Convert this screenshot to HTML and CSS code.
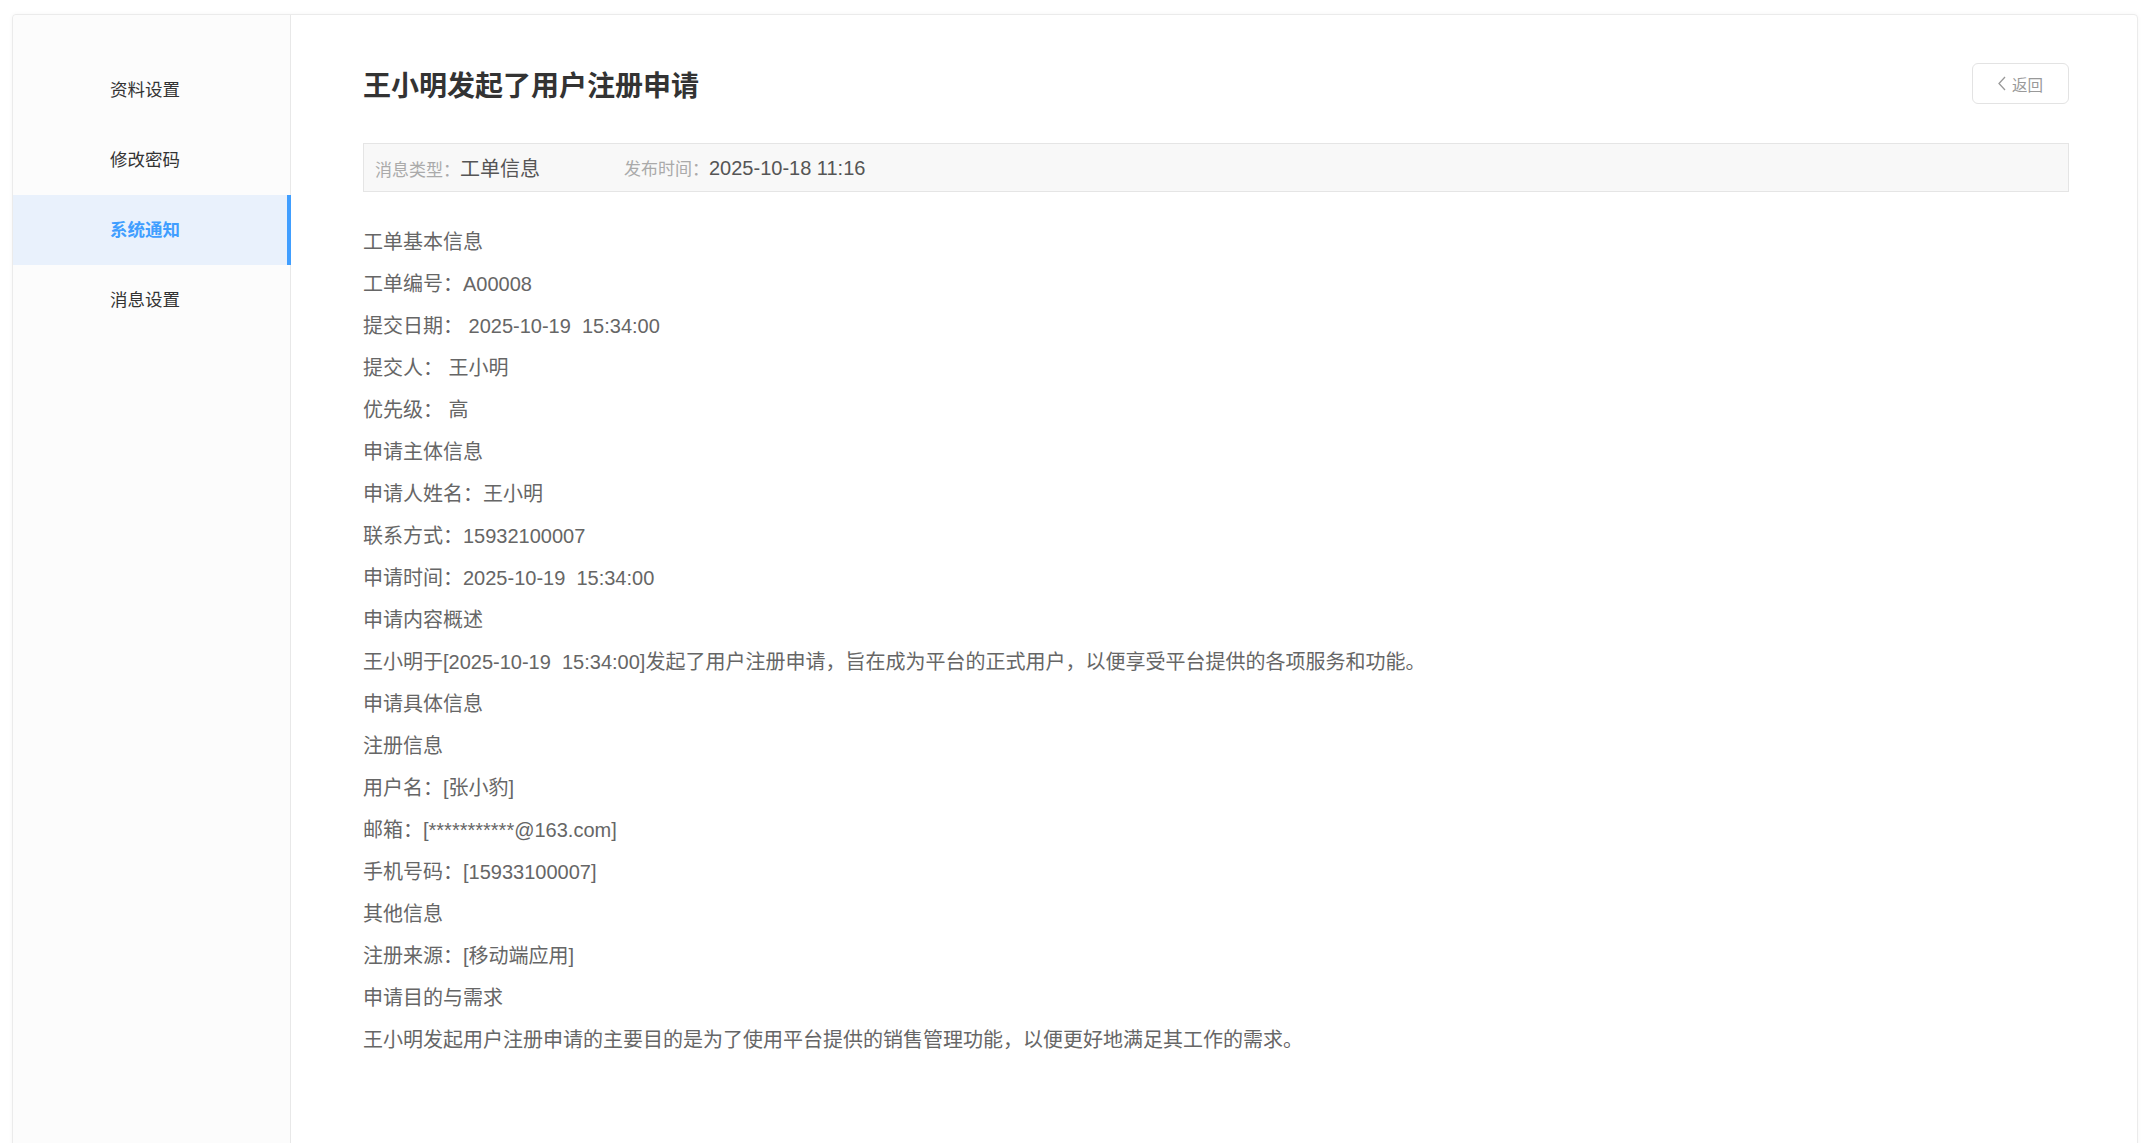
FILE: index.html
```html
<!DOCTYPE html>
<html lang="zh-CN">
<head>
    <meta charset="UTF-8">
    <meta name="viewport" content="width=device-width, initial-scale=1.0">
    <title>系统通知</title>
    <link rel="stylesheet" href="styles.css">
</head>
<body>
  <div class="card">
    <aside class="side-menu">
      <ul class="menu-list">
        <li class="menu-item">资料设置</li>
        <li class="menu-item">修改密码</li>
        <li class="menu-item menu-item--active">系统通知</li>
        <li class="menu-item">消息设置</li>
      </ul>
    </aside>
    <main class="detail">
      <div class="detail-head">
        <h1 class="detail-title">王小明发起了用户注册申请</h1>
        <button class="back-btn">
          <svg class="back-icon" width="10" height="15" viewBox="0 0 10 15">
            <path d="M8 1 L2 7.5 L8 14" fill="none" stroke="#999" stroke-width="1.3"/>
          </svg>
          返回
        </button>
      </div>
      <div class="meta-bar">
        <div class="meta-item"><span class="meta-label">消息类型：</span><span class="meta-value">工单信息</span></div>
        <div class="meta-item"><span class="meta-label">发布时间：</span><span class="meta-value">2025-10-18 11:16</span></div>
      </div>
      <div class="detail-body">
        <p>工单基本信息</p>
        <p>工单编号：A00008</p>
        <p>提交日期： 2025-10-19  15:34:00</p>
        <p>提交人： 王小明</p>
        <p>优先级： 高</p>
        <p>申请主体信息</p>
        <p>申请人姓名：王小明</p>
        <p>联系方式：15932100007</p>
        <p>申请时间：2025-10-19  15:34:00</p>
        <p>申请内容概述</p>
        <p>王小明于[2025-10-19  15:34:00]发起了用户注册申请，旨在成为平台的正式用户，以便享受平台提供的各项服务和功能。</p>
        <p>申请具体信息</p>
        <p>注册信息</p>
        <p>用户名：[张小豹]</p>
        <p>邮箱：[***********@163.com]</p>
        <p>手机号码：[15933100007]</p>
        <p>其他信息</p>
        <p>注册来源：[移动端应用]</p>
        <p>申请目的与需求</p>
        <p>王小明发起用户注册申请的主要目的是为了使用平台提供的销售管理功能，以便更好地满足其工作的需求。</p>
      </div>
    </main>
  </div>
</body>
</html>
```

FILE: styles.css
```css
html, body {
  overflow: hidden;
}

body {
  margin: 0;
  padding: 14px 11px 0 12px;
  background: #fff;
  font-family: "Liberation Sans", "Noto Sans CJK SC", sans-serif;
  color: #333;
}

.card {
  display: flex;
  min-height: 1200px;
  border: 1px solid #ebebeb;
  border-radius: 4px;
  box-shadow: 0 0 4px rgba(0, 0, 0, 0.04);
  background: #fff;
}

.side-menu {
  width: 277px;
  flex-shrink: 0;
  background: #fcfcfc;
  border-right: 1px solid #e8e8e8;
  padding-top: 40px;
  border-radius: 4px 0 0 4px;
}

.menu-list {
  list-style: none;
  margin: 0;
  padding: 0;
}

.menu-item {
  height: 70px;
  line-height: 70px;
  padding-left: 97px;
  font-size: 17.5px;
  color: #333;
  margin-right: -1px;
}

.menu-item--active {
  background: #e9f1fc;
  color: #409eff;
  font-weight: bold;
  border-right: 4px solid #409eff;
}

.detail {
  flex: 1;
  padding: 48px 68px 0 72px;
}

.detail-head {
  display: flex;
  justify-content: space-between;
  align-items: center;
  margin-bottom: 39px;
}

.detail-title {
  margin: 0;
  font-size: 28px;
  line-height: 40px;
  font-weight: bold;
  color: #333;
  position: relative;
  top: 3px;
}

.back-btn {
  display: flex;
  align-items: center;
  gap: 5px;
  height: 41px;
  width: 97px;
  padding: 0 0 0 24px;
  border: 1px solid #e3e3e3;
  border-radius: 6px;
  background: #fff;
  color: #999;
  font-family: "Liberation Sans", "Noto Sans CJK SC", sans-serif;
  font-size: 15.5px;
  cursor: pointer;
}

.meta-bar {
  display: flex;
  align-items: center;
  height: 47px;
  padding-left: 11px;
  background: #f8f8f8;
  border: 1px solid #e5e5e5;
}

.meta-item {
  margin-right: 84px;
  display: flex;
  align-items: baseline;
}

.meta-label {
  font-size: 17px;
  color: #aaa;
}

.meta-value {
  font-size: 20px;
  color: #555;
}

.detail-body {
  margin-top: 29px;
  color: #666;
  font-size: 20px;
}

.detail-body p {
  margin: 0;
  line-height: 42px;
  white-space: pre-wrap;
}
```
